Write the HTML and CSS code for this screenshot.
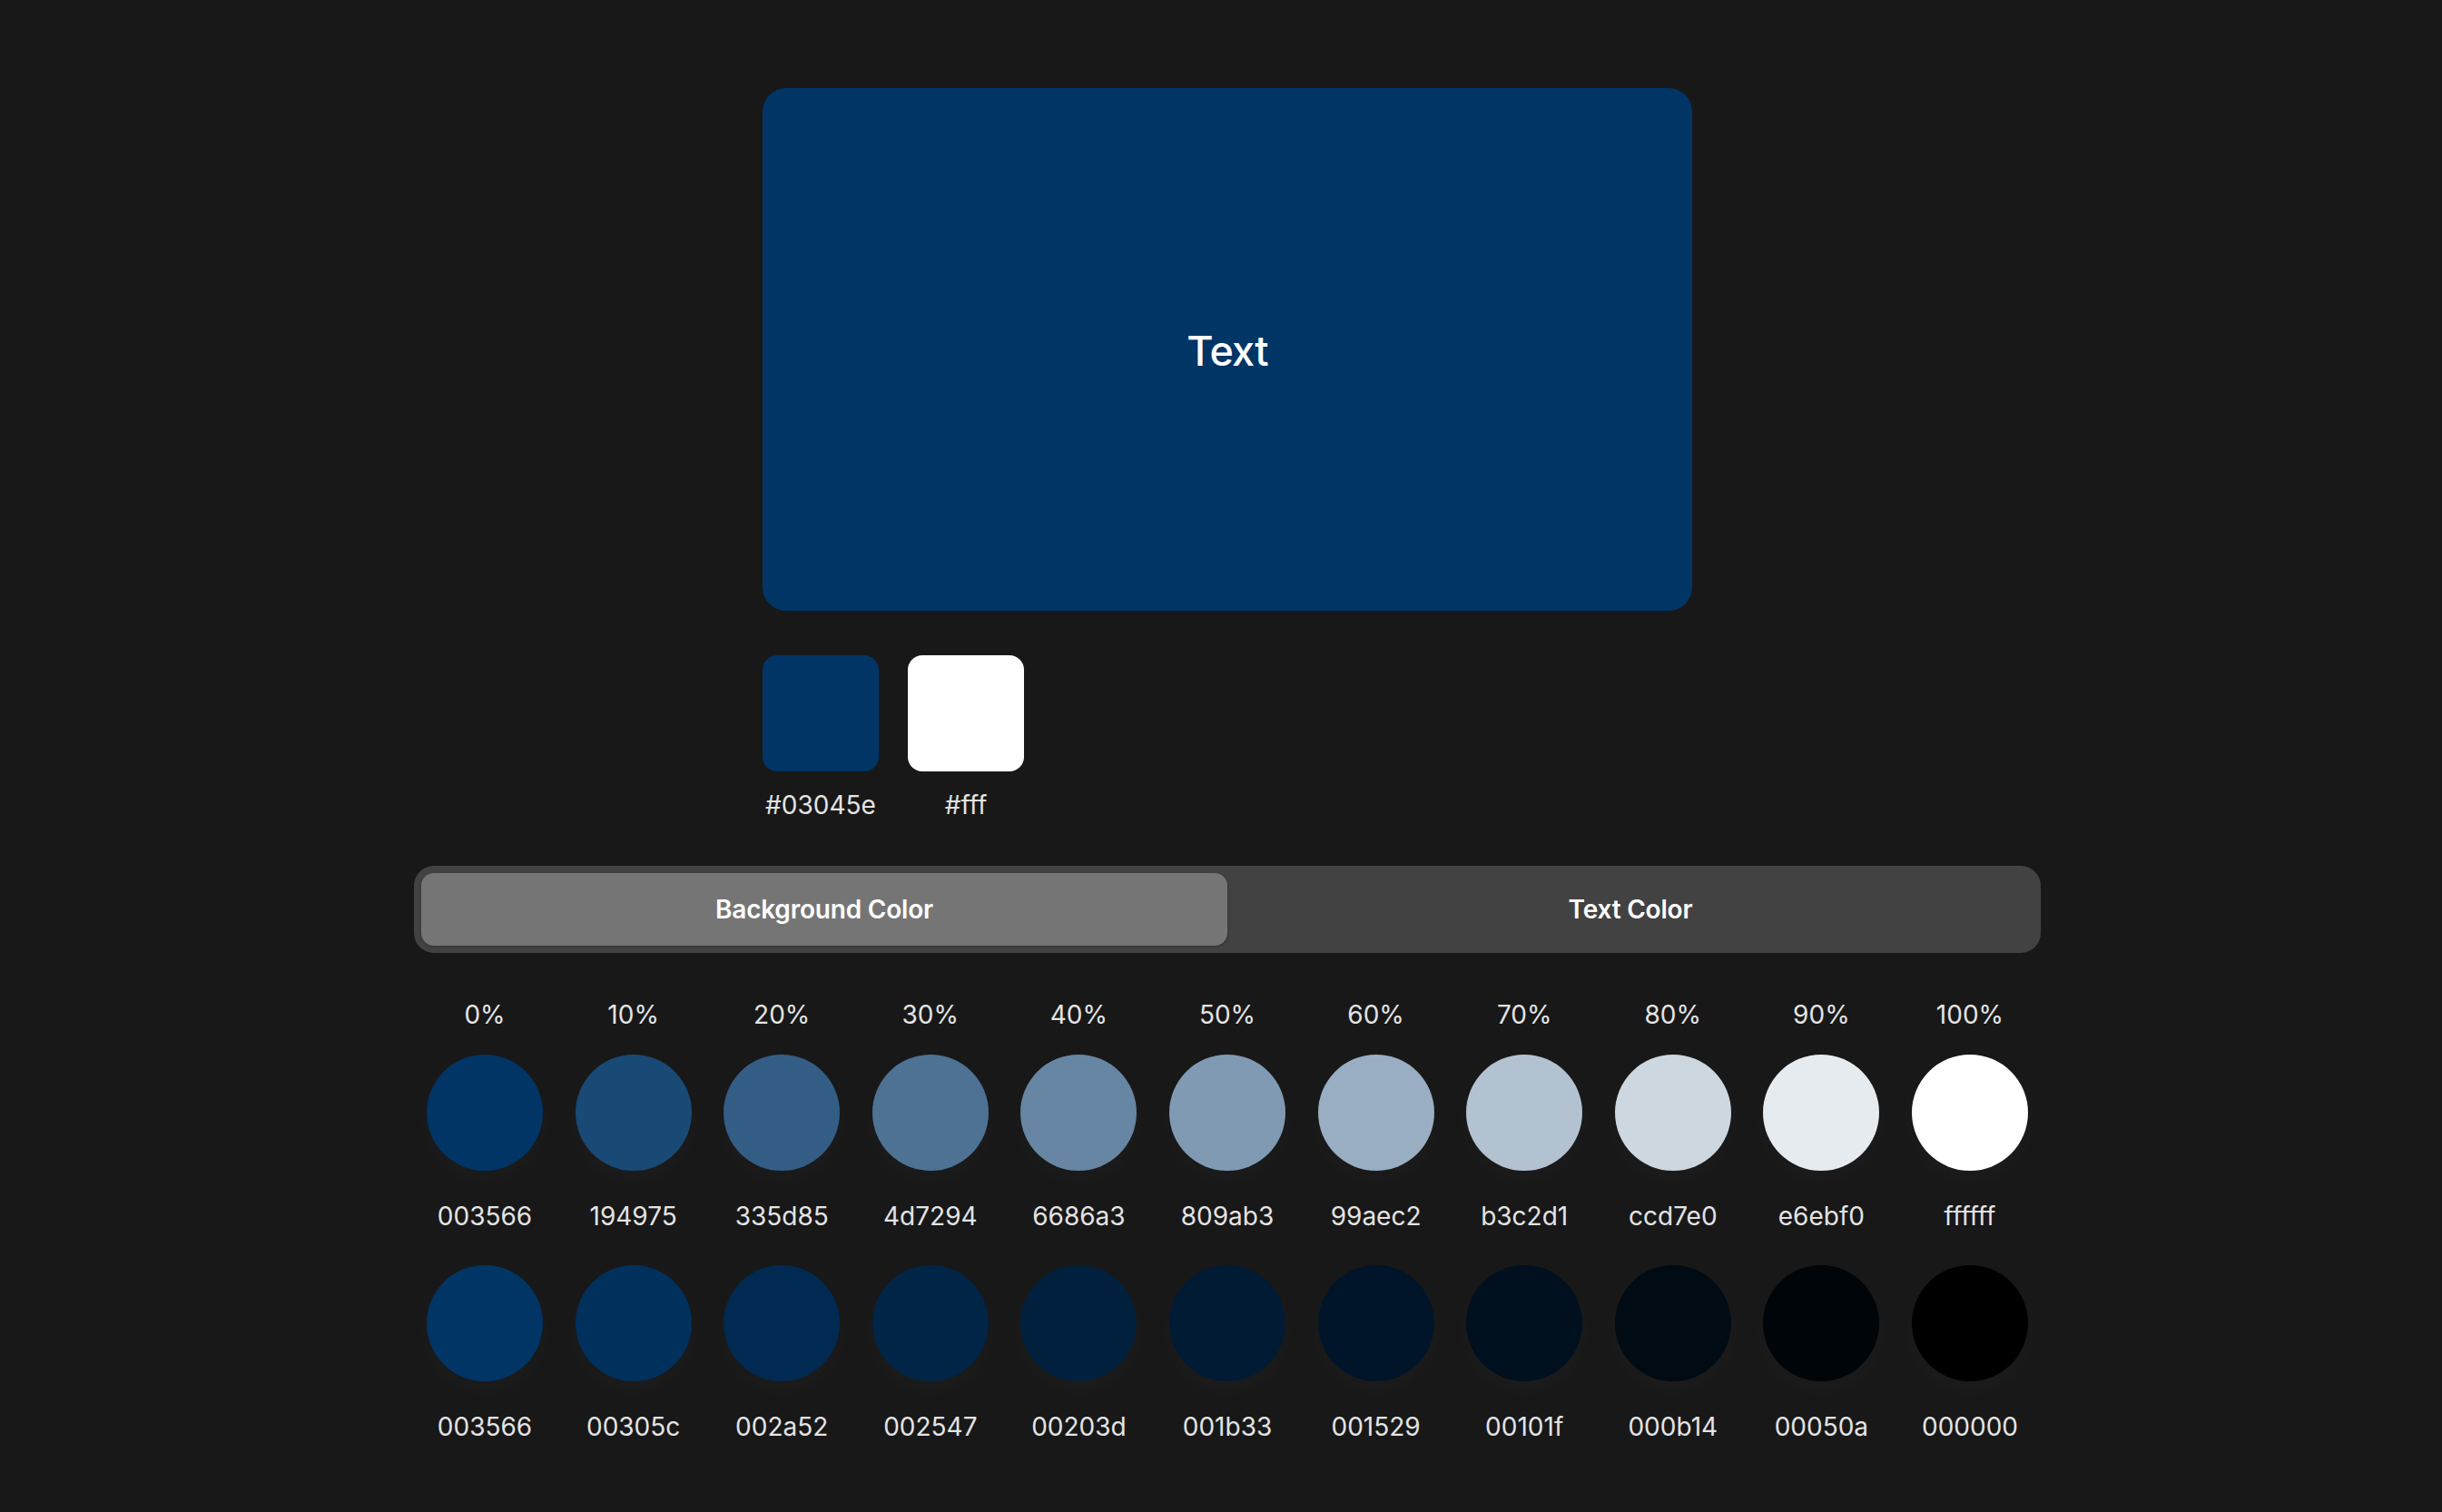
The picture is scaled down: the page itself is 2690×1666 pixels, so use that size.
FILE: index.html
```html
<!DOCTYPE html>
<html lang="en">
<head>
<meta charset="utf-8">
<title>Color Shades</title>
<link rel="stylesheet" href="styles.css">
</head>
<body>
<main class="app">
  <section class="preview-section">
    <div class="preview"><span class="preview-text">Text</span></div>
    <div class="swatches">
      <div class="swatch-item">
        <div class="swatch swatch-bg"></div>
        <div class="swatch-label">#03045e</div>
      </div>
      <div class="swatch-item">
        <div class="swatch swatch-fg"></div>
        <div class="swatch-label">#fff</div>
      </div>
    </div>
  </section>

  <div class="tabs">
    <div class="tab active">Background Color</div>
    <div class="tab">Text Color</div>
  </div>

  <section class="shades">
    <div class="pct">0%</div><div class="pct">10%</div><div class="pct">20%</div><div class="pct">30%</div><div class="pct">40%</div><div class="pct">50%</div><div class="pct">60%</div><div class="pct">70%</div><div class="pct">80%</div><div class="pct">90%</div><div class="pct">100%</div>

    <div class="dot" style="background:#003566"></div>
    <div class="dot" style="background:#194975"></div>
    <div class="dot" style="background:#335d85"></div>
    <div class="dot" style="background:#4d7294"></div>
    <div class="dot" style="background:#6686a3"></div>
    <div class="dot" style="background:#809ab3"></div>
    <div class="dot" style="background:#99aec2"></div>
    <div class="dot" style="background:#b3c2d1"></div>
    <div class="dot" style="background:#ccd7e0"></div>
    <div class="dot" style="background:#e6ebf0"></div>
    <div class="dot" style="background:#ffffff"></div>

    <div class="hex">003566</div><div class="hex">194975</div><div class="hex">335d85</div><div class="hex">4d7294</div><div class="hex">6686a3</div><div class="hex">809ab3</div><div class="hex">99aec2</div><div class="hex">b3c2d1</div><div class="hex">ccd7e0</div><div class="hex">e6ebf0</div><div class="hex">ffffff</div>

    <div class="dot dot-dark" style="background:#003566"></div>
    <div class="dot dot-dark" style="background:#00305c"></div>
    <div class="dot dot-dark" style="background:#002a52"></div>
    <div class="dot dot-dark" style="background:#002547"></div>
    <div class="dot dot-dark" style="background:#00203d"></div>
    <div class="dot dot-dark" style="background:#001b33"></div>
    <div class="dot dot-dark" style="background:#001529"></div>
    <div class="dot dot-dark" style="background:#00101f"></div>
    <div class="dot dot-dark" style="background:#000b14"></div>
    <div class="dot dot-dark" style="background:#00050a"></div>
    <div class="dot dot-dark" style="background:#000000"></div>

    <div class="hex">003566</div><div class="hex">00305c</div><div class="hex">002a52</div><div class="hex">002547</div><div class="hex">00203d</div><div class="hex">001b33</div><div class="hex">001529</div><div class="hex">00101f</div><div class="hex">000b14</div><div class="hex">00050a</div><div class="hex">000000</div>
  </section>
</main>
</body>
</html>
```

FILE: styles.css
```css
* {
  box-sizing: border-box;
}

html, body {
  margin: 0;
  padding: 0;
  background: #181818;
}

body {
  font-family: Inter, "Noto Sans", "Liberation Sans", sans-serif;
  color: #e4e4e4;
}

.app {
  display: flex;
  flex-direction: column;
  align-items: center;
  padding: 97px 0 60px 14px;
}

.preview-section {
  width: 1024px;
}

.preview {
  height: 576px;
  border-radius: 26px;
  background: #003566;
  display: flex;
  align-items: center;
  justify-content: center;
}

.preview-text {
  color: #ffffff;
  font-size: 45px;
  font-weight: 500;
  letter-spacing: -0.8px;
  margin-top: 3px;
}

.swatches {
  display: flex;
  gap: 32px;
  margin-top: 49px;
}

.swatch-item {
  width: 128px;
  display: flex;
  flex-direction: column;
  align-items: center;
}

.swatch {
  width: 128px;
  height: 128px;
  border-radius: 16px;
}

.swatch-bg {
  background: #003566;
}

.swatch-fg {
  background: #ffffff;
}

.swatch-label {
  margin-top: 20px;
  font-size: 28px;
  line-height: 34px;
  color: #e4e4e4;
  white-space: nowrap;
}

.tabs {
  width: 1792px;
  margin-top: 50px;
  padding: 8px;
  background: #424242;
  border-radius: 22px;
  display: grid;
  grid-template-columns: 1fr 1fr;
}

.tab {
  height: 80px;
  display: flex;
  align-items: center;
  justify-content: center;
  font-size: 28px;
  font-weight: 600;
  letter-spacing: -0.2px;
  color: #ffffff;
  border-radius: 14px;
}

.tab.active {
  background: #757575;
  box-shadow: 0 1px 3px rgba(0, 0, 0, 0.25);
}

.shades {
  width: 1792px;
  margin-top: 51px;
  display: grid;
  grid-template-columns: repeat(11, 163.6px);
  justify-content: center;
}

.pct,
.hex {
  font-size: 28px;
  line-height: 34px;
  text-align: center;
  color: #e4e4e4;
  white-space: nowrap;
}

.dot {
  justify-self: center;
  width: 128px;
  height: 128px;
  border-radius: 50%;
  margin-top: 27px;
  box-shadow: 0 10px 30px rgba(255, 255, 255, 0.025);
}

.dot-dark {
  margin-top: 37px;
}

.hex {
  margin-top: 33px;
}
```
